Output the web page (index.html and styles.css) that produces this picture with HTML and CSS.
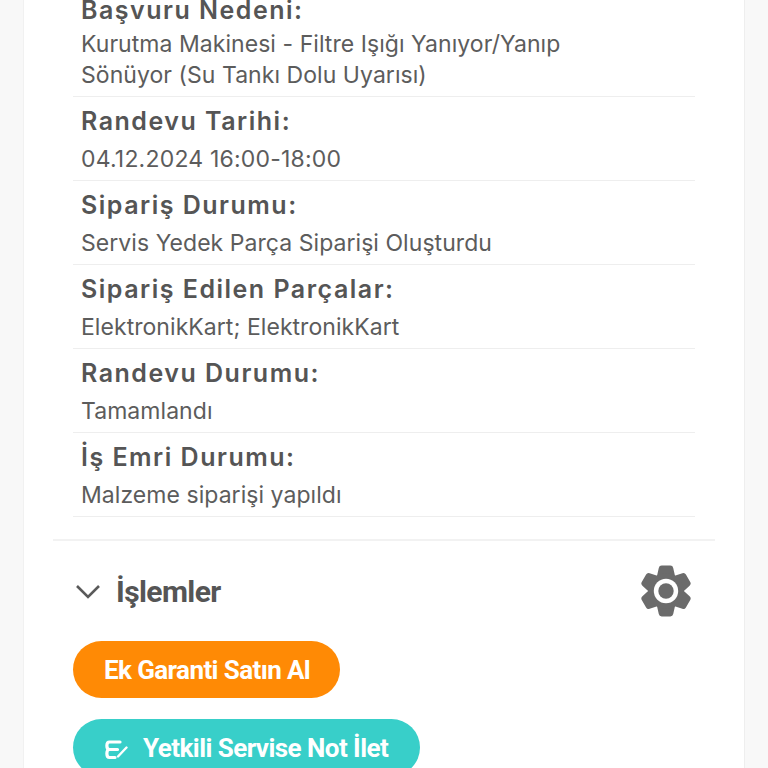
FILE: index.html
```html
<!DOCTYPE html>
<html lang="tr">
<head>
<meta charset="utf-8">
<title>Başvuru Detayı</title>
<link rel="stylesheet" href="styles.css">
</head>
<body>
<main class="card">
  <section class="details">
    <div class="row row-first">
      <div class="label">Başvuru Nedeni:</div>
      <div class="value">Kurutma Makinesi - Filtre Işığı Yanıyor/Yanıp<br>Sönüyor (Su Tankı Dolu Uyarısı)</div>
    </div>
    <div class="row"><div class="label">Randevu Tarihi:</div><div class="value value-date">04.12.2024 16:00-18:00</div></div>
    <div class="row"><div class="label">Sipariş Durumu:</div><div class="value">Servis Yedek Parça Siparişi Oluşturdu</div></div>
    <div class="row"><div class="label">Sipariş Edilen Parçalar:</div><div class="value">ElektronikKart; ElektronikKart</div></div>
    <div class="row"><div class="label">Randevu Durumu:</div><div class="value">Tamamlandı</div></div>
    <div class="row"><div class="label">İş Emri Durumu:</div><div class="value">Malzeme siparişi yapıldı</div></div>
  </section>
  <section class="actions">
    <div class="actions-head">
      <div class="actions-title">
        <svg class="chevron" viewBox="0 0 26 16" aria-hidden="true"><path d="M2 3l11 11L24 3" fill="none" stroke="#5a5a5a" stroke-width="2.6"/></svg>
        <h2>İşlemler</h2>
      </div>
      <svg class="gear" viewBox="-26 -27 52 54" aria-hidden="true">
        <g fill="#6b6b6b">
          <path d="M-4.500-26.500h9q2.500 0 3 2.500l2 9h-19l2-9q.5-2.500 3-2.500z"/>
          <path transform="rotate(60)" d="M-4.500-26.500h9q2.500 0 3 2.500l2 9h-19l2-9q.5-2.500 3-2.500z"/>
          <path transform="rotate(120)" d="M-4.500-26.500h9q2.500 0 3 2.500l2 9h-19l2-9q.5-2.500 3-2.500z"/>
          <path transform="rotate(180)" d="M-4.500-26.500h9q2.500 0 3 2.500l2 9h-19l2-9q.5-2.500 3-2.500z"/>
          <path transform="rotate(240)" d="M-4.500-26.500h9q2.500 0 3 2.500l2 9h-19l2-9q.5-2.500 3-2.500z"/>
          <path transform="rotate(300)" d="M-4.500-26.500h9q2.500 0 3 2.500l2 9h-19l2-9q.5-2.500 3-2.500z"/>
          <circle r="18.500"/>
        </g>
        <circle r="12.700" fill="#fff"/>
        <circle r="8" fill="#6b6b6b"/>
      </svg>
    </div>
    <div class="buttons">
      <button class="btn btn-orange" type="button">Ek Garanti Satın Al</button>
      <button class="btn btn-teal" type="button">
        <svg class="note" viewBox="0 0 24 24" aria-hidden="true"><g fill="none" stroke="#fff" stroke-width="3.200" stroke-linecap="round" stroke-linejoin="round"><path d="M16 6H5.500c-3.500 0-3.500 7.500 0 7.500h8"/><path d="M5.500 13.500c-3.500 0-3.500 8 0 8H11"/><path d="M14 20.500l8.500-9" stroke-width="2.400"/></g></svg>
        Yetkili Servise Not İlet
      </button>
    </div>
  </section>
</main>
</body>
</html>
```
FILE: styles.css
```css
html, body {
  margin: 0;
  height: 768px;
  overflow: hidden;
  background: #f8f8f8;
}
body {
  font-family: Inter, "Liberation Sans", sans-serif;
  color: #555;
}
.card {
  width: 722px;
  height: 768px;
  box-sizing: border-box;
  margin-left: 23px;
  background: #fff;
  border-left: 1px solid #f1f1f1;
  border-right: 1px solid #eee;
  overflow: hidden;
}
.details {
  margin: -14px 49px 0;
}
.row {
  height: 84px;
  box-sizing: border-box;
  padding: 11px 8px 0;
  border-bottom: 1px solid #eeeeee;
}
.row-first {
  height: 111px;
}
.label {
  font-size: 25px;
  line-height: 27px;
  font-weight: 600;
  letter-spacing: 1.5px;
  color: #555;
}
.value {
  margin-top: 9px;
  font-size: 23px;
  line-height: 31px;
  font-weight: 400;
  letter-spacing: 0.05px;
  color: #5c5c5c;
}
.value-date {
  letter-spacing: 0.2px;
}
.row-first .value {
  margin-top: 5px;
}
.actions {
  margin: 22px 29px 0;
  border-top: 2px solid #f2f2f2;
  padding: 0 20px;
}
.actions-head {
  display: flex;
  align-items: center;
  justify-content: space-between;
  height: 100px;
}
.actions-title {
  display: flex;
  align-items: center;
  gap: 15px;
  padding-left: 2px;
}
.chevron {
  width: 26px;
  height: 16px;
}
h2 {
  margin: 0;
  font-family: Roboto, sans-serif;
  font-size: 30px;
  font-weight: 700;
  letter-spacing: -0.6px;
  color: #555;
}
.gear {
  width: 50px;
  height: 52px;
  margin-right: 4px;
}
.buttons {
  display: flex;
  flex-direction: column;
  align-items: flex-start;
  gap: 21px;
}
.btn {
  display: flex;
  align-items: center;
  gap: 15px;
  height: 57px;
  border: 0;
  border-radius: 29px;
  font-family: Roboto, sans-serif;
  font-size: 26px;
  font-weight: 700;
  color: #fff;
}
.btn-orange {
  padding: 0 30px 0 31px;
  letter-spacing: -0.6px;
  background: #ff8a05;
}
.btn-teal {
  padding: 0 32px 0 31px;
  letter-spacing: -0.55px;
  background: #38cfc9;
}
.note {
  width: 24px;
  height: 24px;
}
```
